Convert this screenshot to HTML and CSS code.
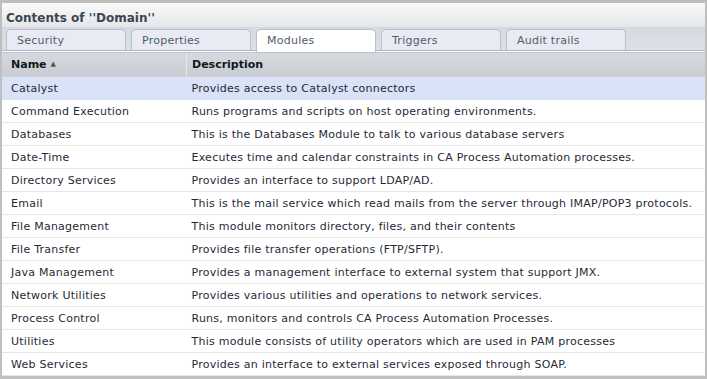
FILE: index.html
```html
<!DOCTYPE html>
<html lang="en">
<head>
    <meta charset="UTF-8">
    <title>Contents of "Domain"</title>
    <link rel="stylesheet" href="styles.css">
</head>
<body>
    <div class="panel">
        <div class="panel-title">Contents of ''Domain''</div>
        <div class="tab-strip">
            <div class="tab">Security</div>
            <div class="tab">Properties</div>
            <div class="tab active">Modules</div>
            <div class="tab">Triggers</div>
            <div class="tab">Audit trails</div>
        </div>
        <table class="grid">
            <thead>
                <tr>
                    <th class="col-name">Name <span class="sort">&#9650;</span></th>
                    <th>Description</th>
                </tr>
            </thead>
            <tbody>
                <tr class="selected"><td>Catalyst</td><td>Provides access to Catalyst connectors</td></tr>
                <tr><td>Command Execution</td><td>Runs programs and scripts on host operating environments.</td></tr>
                <tr><td>Databases</td><td>This is the Databases Module to talk to various database servers</td></tr>
                <tr><td>Date-Time</td><td>Executes time and calendar constraints in CA Process Automation processes.</td></tr>
                <tr><td>Directory Services</td><td>Provides an interface to support LDAP/AD.</td></tr>
                <tr><td>Email</td><td>This is the mail service which read mails from the server through IMAP/POP3 protocols.</td></tr>
                <tr><td>File Management</td><td>This module monitors directory, files, and their contents</td></tr>
                <tr><td>File Transfer</td><td>Provides file transfer operations (FTP/SFTP).</td></tr>
                <tr><td>Java Management</td><td>Provides a management interface to external system that support JMX.</td></tr>
                <tr><td>Network Utilities</td><td>Provides various utilities and operations to network services.</td></tr>
                <tr><td>Process Control</td><td>Runs, monitors and controls CA Process Automation Processes.</td></tr>
                <tr><td>Utilities</td><td>This module consists of utility operators which are used in PAM processes</td></tr>
                <tr><td>Web Services</td><td>Provides an interface to external services exposed through SOAP.</td></tr>
            </tbody>
        </table>
    </div>
</body>
</html>
```

FILE: styles.css
```css
body {
    margin: 0;
    height: 379px;
    padding: 3px 2px;
    box-sizing: border-box;
    background-color: #bfbfbf;
    font-family: "DejaVu Sans", Verdana, sans-serif;
    font-size: 11px;
    letter-spacing: 0.25px;
    overflow: hidden;
}
.panel {
    height: 373px;
    background: white;
    overflow: hidden;
}
.panel-title {
    height: 21px;
    padding: 3px 0 0 4px;
    line-height: 24px;
    font-size: 12px;
    font-weight: bold;
    letter-spacing: 0;
    color: #3b4654;
    background: linear-gradient(#fafafa, #e4e6ea);
}
.tab-strip {
    display: flex;
    gap: 5px;
    height: 21px;
    padding: 2px 0 0 4px;
    background: linear-gradient(#d5d9df, #dde0e5);
    border-bottom: 1px solid #a9b5c6;
    box-shadow: 0 1px 0 #fff, 0 2px 0 #b8c2d0;
    margin-bottom: 2px;
}
.tab {
    width: 108px;
    padding-left: 10px;
    line-height: 21px;
    color: #4f5c6b;
    background: #e8ebf3;
    border: 1px solid #b6c0cf;
    border-bottom: none;
    border-radius: 5px 5px 0 0;
}
.tab.active {
    background: #fff;
    height: 22px;
    position: relative;
    z-index: 1;
}
.grid {
    width: 100%;
    border-collapse: collapse;
    color: #1f2a36;
}
.grid th {
    height: 23px;
    padding: 0 5px;
    text-align: left;
    font-weight: bold;
    letter-spacing: 0;
    color: #101820;
    background: linear-gradient(#d7d9de, #c9cdd3);
    border-bottom: 1px solid #d0d3d8;
}
.grid th.col-name {
    width: 170px;
    padding-left: 9px;
    border-right: 1px solid #e6e8eb;
}
.sort {
    font-size: 7px;
    color: #555;
    vertical-align: 2px;
}
.grid td {
    height: 22px;
    padding: 0 0 0 5px;
    border-bottom: 1px solid #e7e7e7;
    white-space: nowrap;
}
.grid td:first-child {
    width: 170px;
    padding-left: 9px;
}
.grid tr.selected td {
    background: #dae2f7;
    border-bottom-color: #dae2f7;
}
```
